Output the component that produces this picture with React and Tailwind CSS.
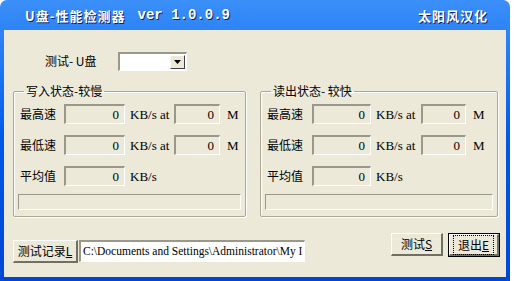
import React from "react";

const cjk = "font-['Noto_Sans_CJK_SC','Noto_Sans',sans-serif]";
const serif = "font-['Liberation_Serif','Times_New_Roman',serif]";
const mono = "font-['Liberation_Mono','Courier_New',monospace]";

function Box({ w, value = "0" }) {
  return (
    <div
      className={`${w} ${serif} h-[20px] flex items-center justify-end pr-[5px] bg-[#ece9d8] border-t-2 border-l-2 border-b border-r border-t-[#9a988a] border-l-[#9a988a] border-b-white border-r-white text-[13px] text-black leading-none`}
    >
      {value}
    </div>
  );
}

function Row({ label, w1, w2, gapL, kW, last }) {
  return (
    <div className="flex items-center h-[20px]">
      <span className={`${gapL} ${cjk} text-[12px] text-black leading-none`}>{label}</span>
      <Box w={w1} />
      <span className={`${serif} ml-[5px] text-[13px] text-black leading-none whitespace-nowrap`}>
        {last ? "KB/s" : <span className={`inline-block ${kW}`}>KB/s at</span>}
      </span>
      {!last && (
        <>
          <Box w={w2} />
          <span className={`${serif} ml-[7px] text-[13px] text-black leading-none`}>M</span>
        </>
      )}
    </div>
  );
}

function Group({ title, width, gapL, w1, w2, kW }) {
  return (
    <fieldset
      className={`${width} border border-[#aca899] rounded-[2px] shadow-[inset_1px_1px_0_#ffffff,1px_1px_0_#ffffff] px-[6px] pb-[6px]`}
    >
      <legend className={`${cjk} ml-[4px] px-[2px] text-[12px] leading-[16px] h-[16px] text-black`}>
        {title}
      </legend>
      <div className="flex flex-col gap-[11px] pt-[5px]">
        <Row label="最高速" gapL={gapL} w1={w1} w2={w2} kW={kW} />
        <Row label="最低速" gapL={gapL} w1={w1} w2={w2} kW={kW} />
        <Row label="平均值" gapL={gapL} w1={w1} w2={w2} kW={kW} last />
      </div>
      <div className="mt-[8px] -mx-[2px] h-[16px] border border-t-[#9a988a] border-l-[#9a988a] border-b-white border-r-white bg-[#ece9d8]" />
    </fieldset>
  );
}

function Btn({ children, w, def }) {
  const inner = (
    <div
      className={`${cjk} h-full w-full flex items-center justify-center border-t border-l border-b-2 border-r-2 border-t-white border-l-white border-b-[#716f64] border-r-[#716f64] bg-[#ece9d8] text-[12px] leading-none text-black`}
    >
      {def ? (
        <span className="px-[4px] py-[3px] outline outline-1 outline-dotted outline-black">{children}</span>
      ) : (
        children
      )}
    </div>
  );
  return def ? (
    <div className={`${w} h-[24px] border border-black`}>{inner}</div>
  ) : (
    <div className={`${w} h-[23px]`}>{inner}</div>
  );
}

export default function App() {
  return (
    <div className="w-[514px] h-[281px] bg-white">
      <div className="w-[510px] h-[281px] flex flex-col rounded-t-[7px] bg-[#0047d8] bg-gradient-to-b from-[#3a8ff9] via-[#0058ea] to-[#0046d6]">
        <div className="h-[30px] flex items-center justify-between pl-[25px] pr-[22px] pt-[1px] text-white font-bold [text-shadow:1px_1px_0_#0a246a]">
          <div className="flex items-center">
            <span className={`${cjk} text-[13px] tracking-[1px]`}>U盘-性能检测器</span>
            <span className={`${mono} ml-[12px] text-[14px]`}>ver 1.0.0.9</span>
          </div>
          <span className={`${cjk} text-[13px] tracking-[1px]`}>太阳风汉化</span>
        </div>
        <div className="flex-1 mx-[4px] mb-[4px] bg-[#ece9d8] flex flex-col pt-[22px]">
          <div className="flex items-center h-[18px]">
            <span className={`${cjk} ml-[41px] w-[73px] text-[12px] leading-none text-black`}>测试- U盘</span>
            <div className="w-[69px] h-[19px] bg-white border-t-2 border-l-2 border-b border-r border-t-[#9a988a] border-l-[#9a988a] border-b-white border-r-white flex justify-end p-[1px]">
              <div className="w-[15px] h-full bg-[#ece9d8] border-t border-l border-b border-r border-t-white border-l-white border-b-[#404040] border-r-[#404040] flex items-center justify-center">
                <svg width="7" height="4" viewBox="0 0 7 4">
                  <path d="M0 0h7L3.5 4z" fill="#000" />
                </svg>
              </div>
            </div>
          </div>
          <div className="flex mt-[13px] ml-[9px] gap-[14px]">
            <Group title="写入状态-较慢" width="w-[233px]" gapL="w-[44px]" w1="w-[61px]" w2="w-[46px]" kW="w-[44px]" />
            <Group title="读出状态- 较快" width="w-[238px]" gapL="w-[45px]" w1="w-[59px]" w2="w-[45px]" kW="w-[45px]" />
          </div>
          <div className="flex items-start mt-[16px] ml-[9px]">
            <div className="flex mt-[7px]">
              <Btn w="w-[65px]">
                <span>
                  测试记录<u>L</u>
                </span>
              </Btn>
              <div
                className={`${serif} w-[226px] h-[22px] ml-[1px] bg-white border-t-2 border-l-2 border-b border-r border-t-[#9a988a] border-l-[#9a988a] border-b-white border-r-white flex items-center pl-[2px] overflow-hidden whitespace-nowrap text-[11.5px] text-black leading-none`}
              >
                C:\Documents and Settings\Administrator\My I
              </div>
            </div>
            <div className="ml-[86px] flex gap-[5px]">
              <Btn w="w-[52px]">
                <span>
                  测试<u>S</u>
                </span>
              </Btn>
              <Btn w="w-[52px]" def>
                <span>
                  退出<u>E</u>
                </span>
              </Btn>
            </div>
          </div>
        </div>
      </div>
    </div>
  );
}
